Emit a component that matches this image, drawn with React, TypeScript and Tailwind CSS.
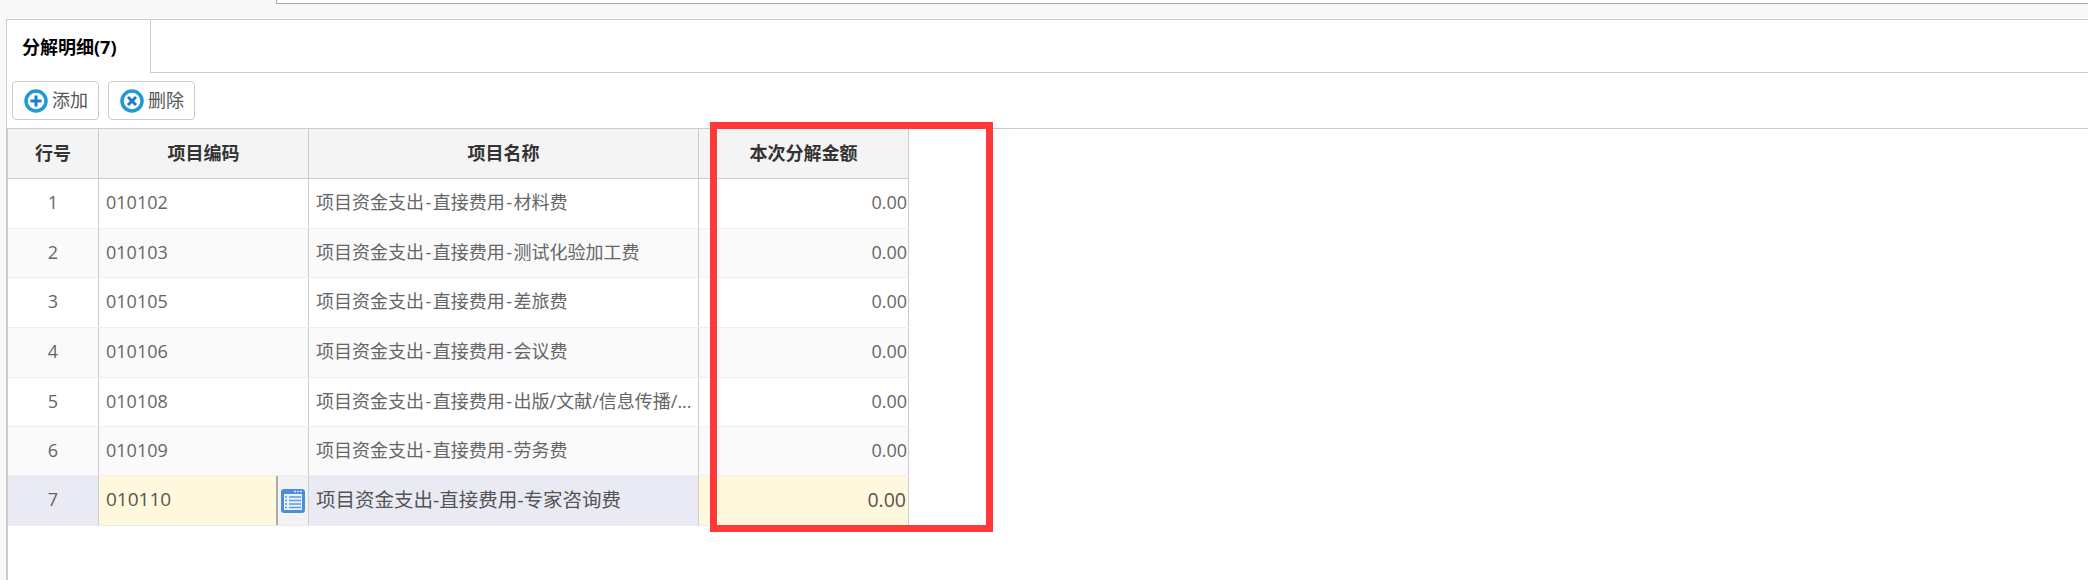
const FONT = "font-['Open_Sans','Noto_Sans_CJK_SC',sans-serif]";

const rows = [
  { no: 1, code: '010102', name: '项目资金支出-直接费用-材料费', h: 'h-[50px]', bg: 'bg-white' },
  { no: 2, code: '010103', name: '项目资金支出-直接费用-测试化验加工费', h: 'h-[49px]', bg: 'bg-[#fafafa]' },
  { no: 3, code: '010105', name: '项目资金支出-直接费用-差旅费', h: 'h-[50px]', bg: 'bg-white' },
  { no: 4, code: '010106', name: '项目资金支出-直接费用-会议费', h: 'h-[50px]', bg: 'bg-[#fafafa]' },
  { no: 5, code: '010108', name: '项目资金支出-直接费用-出版/文献/信息传播/...', h: 'h-[49px]', bg: 'bg-white' },
  { no: 6, code: '010109', name: '项目资金支出-直接费用-劳务费', h: 'h-[49px]', bg: 'bg-[#fafafa]' },
];

function PlusIcon() {
  return (
    <svg width="24" height="24" viewBox="0 0 24 24">
      <circle cx="12" cy="12" r="10" fill="white" stroke="#1f9ad6" strokeWidth="3.5" />
      <path d="M12 6.5v11M6.5 12h11" stroke="#1a7fc4" strokeWidth="3" />
    </svg>
  );
}

function CloseIcon() {
  return (
    <svg width="24" height="24" viewBox="0 0 24 24">
      <circle cx="12" cy="12" r="10" fill="white" stroke="#1f9ad6" strokeWidth="3.5" />
      <path d="M8 8l8 8M16 8l-8 8" stroke="#1a7fc4" strokeWidth="3" />
    </svg>
  );
}

function ListIcon() {
  return (
    <svg width="24" height="24" viewBox="0 0 24 24">
      <rect x="0" y="0" width="24" height="24" rx="3" fill="#4a90d9" />
      <rect x="3" y="5" width="18" height="16" fill="#eaf3fc" />
      <path d="M13 2.5h2M16 2.5h2M19 2.5h2" stroke="#d5e6f8" strokeWidth="1.5" />
      <path d="M4 8h2M8 8h12M4 11.5h2M8 11.5h12M4 15h2M8 15h12M4 18.5h2M8 18.5h12" stroke="#5a9ae0" strokeWidth="1.3" />
    </svg>
  );
}

function ToolButton({ icon, label }: { icon: React.ReactNode; label: string }) {
  return (
    <button className="flex h-[39px] w-[87px] items-center gap-[4px] rounded-[4px] border border-[#ccc] bg-white pl-[11px] text-[18px] text-[#555]">
      {icon}
      <span>{label}</span>
    </button>
  );
}

// the hyphen in the reference's font is wider than in ours
function ItemName({ name }: { name: string }) {
  const parts = name.split('-');
  return (
    <span>
      {parts.map((p, i) => (
        <span key={i}>
          {i > 0 && <span className="px-[1.5px]">-</span>}
          {p}
        </span>
      ))}
    </span>
  );
}

function Row({ no, code, name, h, bg }: { no: number; code: string; name: string; h: string; bg: string }) {
  return (
    <div className={`flex border-b border-[#eeeef3] text-[18px] text-[#666] ${h} ${bg}`}>
      <div className="flex w-[91px] shrink-0 items-center justify-center border-r border-[#ccc] pb-[2px]">{no}</div>
      <div className="flex w-[210px] shrink-0 items-center border-r border-[#ccc] pb-[2px] pl-[7px]">{code}</div>
      <div className="flex w-[390px] shrink-0 items-center overflow-hidden whitespace-nowrap border-r border-[#ccc] pb-[2px] pl-[7px]">
        <ItemName name={name} />
      </div>
      <div className="flex w-[210px] shrink-0 items-center justify-end border-r border-[#ccc] pb-[2px] pr-[1px]">0.00</div>
    </div>
  );
}

export default function App() {
  return (
    <div className={`relative flex h-[580px] w-[2088px] flex-col overflow-hidden bg-[#f8f8f8] ${FONT}`}>
      <div className="h-[19px] shrink-0 pl-[276px]">
        <div className="h-[4px] border-b border-l border-[#aaa] bg-white" />
      </div>
      <div className="ml-[6px] flex flex-1 flex-col border-l border-t border-[#ccc] bg-white">
        <div className="flex h-[53px] shrink-0">
          <div className="flex w-[144px] items-center border-r border-[#ccc] pl-[15px] pt-[2px] text-[18px] font-bold text-black">
            分解明细(7)
          </div>
          <div className="flex-1 border-b border-[#ccc]" />
        </div>
        <div className="flex h-[55px] shrink-0 gap-[9px] pl-[5px] pt-[8px]">
          <ToolButton icon={<PlusIcon />} label="添加" />
          <ToolButton icon={<CloseIcon />} label="删除" />
        </div>
        <div className="flex-1 border-l border-t border-[#ccc]">
          <div className="flex h-[50px] w-[901px] border-b border-[#ccc] bg-[#f4f4f4] text-[18px] font-bold text-[#333]">
            <div className="flex w-[91px] shrink-0 items-center justify-center border-r border-[#ccc]">行号</div>
            <div className="flex w-[210px] shrink-0 items-center justify-center border-r border-[#ccc]">项目编码</div>
            <div className="flex w-[390px] shrink-0 items-center justify-center border-r border-[#ccc]">项目名称</div>
            <div className="flex w-[210px] shrink-0 items-center justify-center border-r border-[#ccc]">本次分解金额</div>
          </div>
          <div className="w-[901px]">
            {rows.map((r) => (
              <Row key={r.no} {...r} />
            ))}
            <div className="flex h-[50px] border-b border-[#e8eaf2] bg-[#e9eaf3] text-[#555]">
              <div className="flex w-[91px] shrink-0 items-center justify-center border-r border-[#ccc] pb-[2px] text-[18px] text-[#666]">7</div>
              <div className="flex w-[210px] shrink-0 border-r border-[#ccc]">
                <div className="flex flex-1 items-center border-r-2 border-[#aaa] bg-[#fff8dc] pb-[2px] pl-[7px] text-[19px]">010110</div>
                <div className="flex w-[30px] items-center justify-center bg-[#f2f2f2]">
                  <ListIcon />
                </div>
              </div>
              <div className="flex w-[390px] shrink-0 items-center border-r border-[#ccc] pb-[2px] pl-[7px] text-[19.5px]">项目资金支出-直接费用-专家咨询费</div>
              <div className="flex w-[210px] shrink-0 items-center justify-end border-r border-[#ccc] bg-[#fff8dc] pb-[2px] pr-[2px] text-[19.5px]">0.00</div>
            </div>
          </div>
        </div>
      </div>
      <div className="absolute left-[710px] top-[122px] h-[410px] w-[283px] border-[7px] border-[#ff3838]" />
    </div>
  );
}
